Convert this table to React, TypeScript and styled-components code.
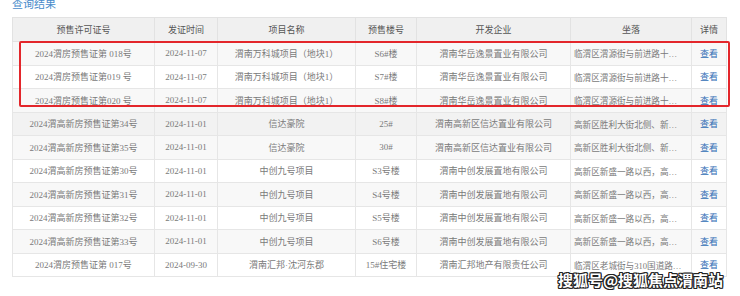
import React from "react";
import styled, { createGlobalStyle } from "styled-components";

const GlobalStyle = createGlobalStyle`
  html, body {
    margin: 0;
    padding: 0;
    background: #fff;
  }
`;

const Page = styled.div`
  position: relative;
  width: 740px;
  height: 296px;
  overflow: hidden;
  padding-left: 12px;
  box-sizing: border-box;
  font-family: "Liberation Serif", "Noto Sans CJK SC", serif;
`;

const Title = styled.h3`
  margin: -2px 0 8px;
  height: 11px;
  font-family: "Noto Sans CJK SC", sans-serif;
  font-size: 11px;
  line-height: 11px;
  font-weight: 400;
  color: #4a8ccb;
`;

const Table = styled.table`
  width: 714px;
  table-layout: fixed;
  border-collapse: collapse;
  border: 1px solid #e4e4e4;
`;

const HeadCell = styled.th`
  height: 23px;
  padding: 0;
  background: #f0f0f0;
  border: 1px solid #e2e2e2;
  font-family: "Noto Sans CJK SC", sans-serif;
  font-size: 9px;
  font-weight: 400;
  color: #555;
  text-align: center;
`;

const Row = styled.tr<{ $bg: string }>`
  height: 23.5px;
  background: ${(p) => p.$bg};
`;

const Cell = styled.td<{ $left?: boolean }>`
  padding: 0 ${(p) => (p.$left ? "3px" : "2px")};
  border: 1px solid #e6e6e6;
  font-size: ${(p) => (p.$left ? "8.6px" : "9px")};
  color: #7a7a7a;
  text-align: ${(p) => (p.$left ? "left" : "center")};
  white-space: nowrap;
  overflow: hidden;
`;

const ViewLink = styled.a`
  font-family: "Noto Sans CJK SC", sans-serif;
  font-size: 9px;
  color: #2f6db5;
  text-decoration: none;
`;

const Highlight = styled.div`
  position: absolute;
  left: 19px;
  top: 41px;
  width: 711px;
  height: 66px;
  box-sizing: border-box;
  border: 2px solid #e3262b;
  border-radius: 2px;
  pointer-events: none;
`;

const Watermark = styled.div`
  position: absolute;
  left: 558px;
  top: 271px;
  font-family: "Noto Sans CJK SC", sans-serif;
  font-size: 15px;
  line-height: 18px;
  font-weight: 700;
  color: #fff;
  text-shadow: 1px 1px 0 #222, -1px -1px 0 #222, 1px -1px 0 #222,
    -1px 1px 0 #222, 0 1px 0 #222, 1px 0 0 #222, 0 -1px 0 #222, -1px 0 0 #222;
`;

const columns = [
  { title: "预售许可证号", width: 142 },
  { title: "发证时间", width: 63 },
  { title: "项目名称", width: 138 },
  { title: "预售楼号", width: 61 },
  { title: "开发企业", width: 154 },
  { title: "坐落", width: 121 },
  { title: "详情", width: 35 },
];

const rows = [
  ["2024渭房预售证第 018号", "2024-11-07", "渭南万科城项目（地块1）", "S6#楼", "渭南华岳逸景置业有限公司", "临渭区渭源街与前进路十…"],
  ["2024渭房预售证第019 号", "2024-11-07", "渭南万科城项目（地块1）", "S7#楼", "渭南华岳逸景置业有限公司", "临渭区渭源街与前进路十…"],
  ["2024渭房预售证第020 号", "2024-11-07", "渭南万科城项目（地块1）", "S8#楼", "渭南华岳逸景置业有限公司", "临渭区渭源街与前进路十…"],
  ["2024渭高新房预售证第34号", "2024-11-01", "信达豪院", "25#", "渭南高新区信达置业有限公司", "高新区胜利大街北侧、新…"],
  ["2024渭高新房预售证第35号", "2024-11-01", "信达豪院", "30#", "渭南高新区信达置业有限公司", "高新区胜利大街北侧、新…"],
  ["2024渭高新房预售证第30号", "2024-11-01", "中创九号项目", "S3号楼", "渭南中创发展置地有限公司", "高新区新盛一路以西，高…"],
  ["2024渭高新房预售证第31号", "2024-11-01", "中创九号项目", "S4号楼", "渭南中创发展置地有限公司", "高新区新盛一路以西，高…"],
  ["2024渭高新房预售证第32号", "2024-11-01", "中创九号项目", "S5号楼", "渭南中创发展置地有限公司", "高新区新盛一路以西，高…"],
  ["2024渭高新房预售证第33号", "2024-11-01", "中创九号项目", "S6号楼", "渭南中创发展置地有限公司", "高新区新盛一路以西，高…"],
  ["2024渭房预售证第 017号", "2024-09-30", "渭南汇邦·沈河东郡", "15#住宅楼", "渭南汇邦地产有限责任公司", "临渭区老城街与310国道路…"],
];

const rowBg = (i: number) => (i === 3 ? "#f2f2f2" : i % 2 === 0 ? "#f8f8f8" : "#fff");

export default function App() {
  return (
    <Page>
      <GlobalStyle />
      <Title>查询结果</Title>
      <Table>
        <colgroup>
          {columns.map((c) => (
            <col key={c.title} style={{ width: c.width }} />
          ))}
        </colgroup>
        <thead>
          <tr>
            {columns.map((c) => (
              <HeadCell key={c.title}>{c.title}</HeadCell>
            ))}
          </tr>
        </thead>
        <tbody>
          {rows.map((r, i) => (
            <Row key={i} $bg={rowBg(i)}>
              {r.map((v, j) => (
                <Cell key={j} $left={j === 5}>
                  {v}
                </Cell>
              ))}
              <Cell>
                <ViewLink href="#">查看</ViewLink>
              </Cell>
            </Row>
          ))}
        </tbody>
      </Table>
      <Highlight />
      <Watermark>搜狐号@搜狐焦点渭南站</Watermark>
    </Page>
  );
}
